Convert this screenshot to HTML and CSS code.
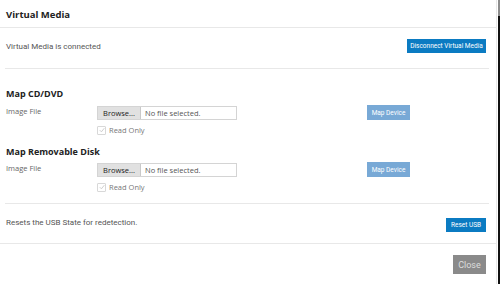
FILE: index.html
```html
<!DOCTYPE html>
<html>
<head>
    <title>Virtual Media</title>
    <link rel="stylesheet" href="styles.css">
</head>
<body>
    <div class="modal">
        <div class="modal-header">Virtual Media</div>

        <!-- Connection state -->
        <div class="status-row">
            <span class="text">Virtual Media is connected</span>
            <button class="btn btn-primary btn-disconnect">Disconnect Virtual Media</button>
        </div>

        <!-- CD/DVD -->
        <div class="map-section">
            <div class="map-title">Map CD/DVD</div>
            <div class="map-row">
                <span class="label">Image File</span>
                <div class="file-box">
                    <span class="browse">Browse...</span>
                    <span class="file-name">No file selected.</span>
                </div>
                <button class="btn btn-light">Map Device</button>
            </div>
            <div class="check-row">
                <span class="check"><svg width="6" height="6" viewBox="0 0 6 6"><path d="M0.8 3.2 L2.4 4.8 L5.3 1.2" fill="none" stroke="#c8c8c8" stroke-width="0.9"/></svg></span>
                <span>Read Only</span>
            </div>

            <div class="map-title second">Map Removable Disk</div>
            <div class="map-row">
                <span class="label">Image File</span>
                <div class="file-box">
                    <span class="browse">Browse...</span>
                    <span class="file-name">No file selected.</span>
                </div>
                <button class="btn btn-light">Map Device</button>
            </div>
            <div class="check-row">
                <span class="check"><svg width="6" height="6" viewBox="0 0 6 6"><path d="M0.8 3.2 L2.4 4.8 L5.3 1.2" fill="none" stroke="#c8c8c8" stroke-width="0.9"/></svg></span>
                <span>Read Only</span>
            </div>
        </div>

        <!-- USB reset -->
        <div class="reset-row">
            <span class="text">Resets the USB State for redetection.</span>
            <button class="btn btn-primary btn-reset">Reset USB</button>
        </div>

        <div class="modal-footer">
            <button class="btn btn-close">Close</button>
        </div>
    </div>
    <div class="scrollbar"></div>
</body>
</html>
```

FILE: styles.css
```css
body {
    margin: 0;
    display: flex;
    height: 284px;
    overflow: hidden;
    background: #fff;
    font-family: Roboto, "Liberation Sans", sans-serif;
    color: #555;
}
.modal {
    flex: 1;
    border-right: 1px solid #e8e8e8;
}
.scrollbar {
    width: 2px;
    margin-left: 1px;
    background: linear-gradient(#8c8c8c 0, #8c8c8c 16px, #111 16px);
}
.modal-header {
    height: 28px;
    box-sizing: border-box;
    padding: 8px 6px 0;
    font-family: "Open Sans", sans-serif;
    font-weight: bold;
    font-size: 9.5px;
    color: #222;
    border-bottom: 1px solid #e8e8e8;
}
.status-row,
.reset-row {
    display: flex;
    justify-content: space-between;
    align-items: center;
    margin: 0 7px 0 5px;
    padding: 11px 3px 15px 1px;
    border-bottom: 1px solid #e8e8e8;
}
.text {
    font-size: 8px;
    color: #555;
}
.btn {
    border: none;
    border-radius: 0;
    padding: 0;
    font-family: Roboto, "Liberation Sans", sans-serif;
    cursor: pointer;
}
.btn-primary {
    background: #0b7bc2;
    color: #fff;
    height: 14px;
    font-size: 6.5px;
}
.btn-disconnect {
    width: 79px;
}
.map-section {
    margin: 0 7px 0 5px;
    padding: 19px 0 11px 1px;
    border-bottom: 1px solid #e8e8e8;
}
.map-title {
    height: 12px;
    line-height: 12px;
    font-family: "Open Sans", sans-serif;
    font-weight: bold;
    font-size: 9px;
    color: #222;
    margin-bottom: 5px;
}
.map-title.second {
    margin-top: 11px;
    margin-bottom: 4px;
}
.map-row {
    display: grid;
    grid-template-columns: 91px 270px 43px;
    align-items: start;
    height: 15px;
}
.label {
    font-family: "Open Sans", sans-serif;
    font-size: 7.5px;
    color: #666;
    line-height: 12px;
}
.file-box {
    display: flex;
    align-items: center;
    width: 140px;
    height: 14px;
    margin-top: 1px;
    box-sizing: border-box;
    border: 1px solid #d4d4d4;
    font-family: "Open Sans", sans-serif;
    font-size: 7.5px;
}
.browse {
    width: 42px;
    height: 12px;
    line-height: 12px;
    text-align: center;
    background: #e1e1e1;
    border-right: 1px solid #c9c9c9;
    color: #222;
}
.file-name {
    padding-left: 4px;
    color: #555;
}
.btn-light {
    background: #78a9d6;
    color: #fff;
    height: 15px;
    font-size: 6.5px;
}
.check-row {
    display: flex;
    align-items: center;
    gap: 3px;
    margin: 5px 0 0 91px;
    height: 10px;
    font-family: "Open Sans", sans-serif;
    font-size: 7.5px;
    color: #777;
}
.check {
    display: flex;
    align-items: center;
    justify-content: center;
    width: 7px;
    height: 7px;
    border: 1px solid #d8d8d8;
    border-radius: 1px;
}
.reset-row {
    margin: 0;
    padding: 14px 10px 11px 6px;
}
.reset-row .text {
    margin-top: -6px;
}
.btn-reset {
    width: 40px;
}
.modal-footer {
    display: flex;
    justify-content: flex-end;
    padding: 11px 10px 0;
}
.btn-close {
    width: 33px;
    height: 19px;
    background: #8a8a8a;
    color: #ddd;
    font-size: 9px;
}
```
